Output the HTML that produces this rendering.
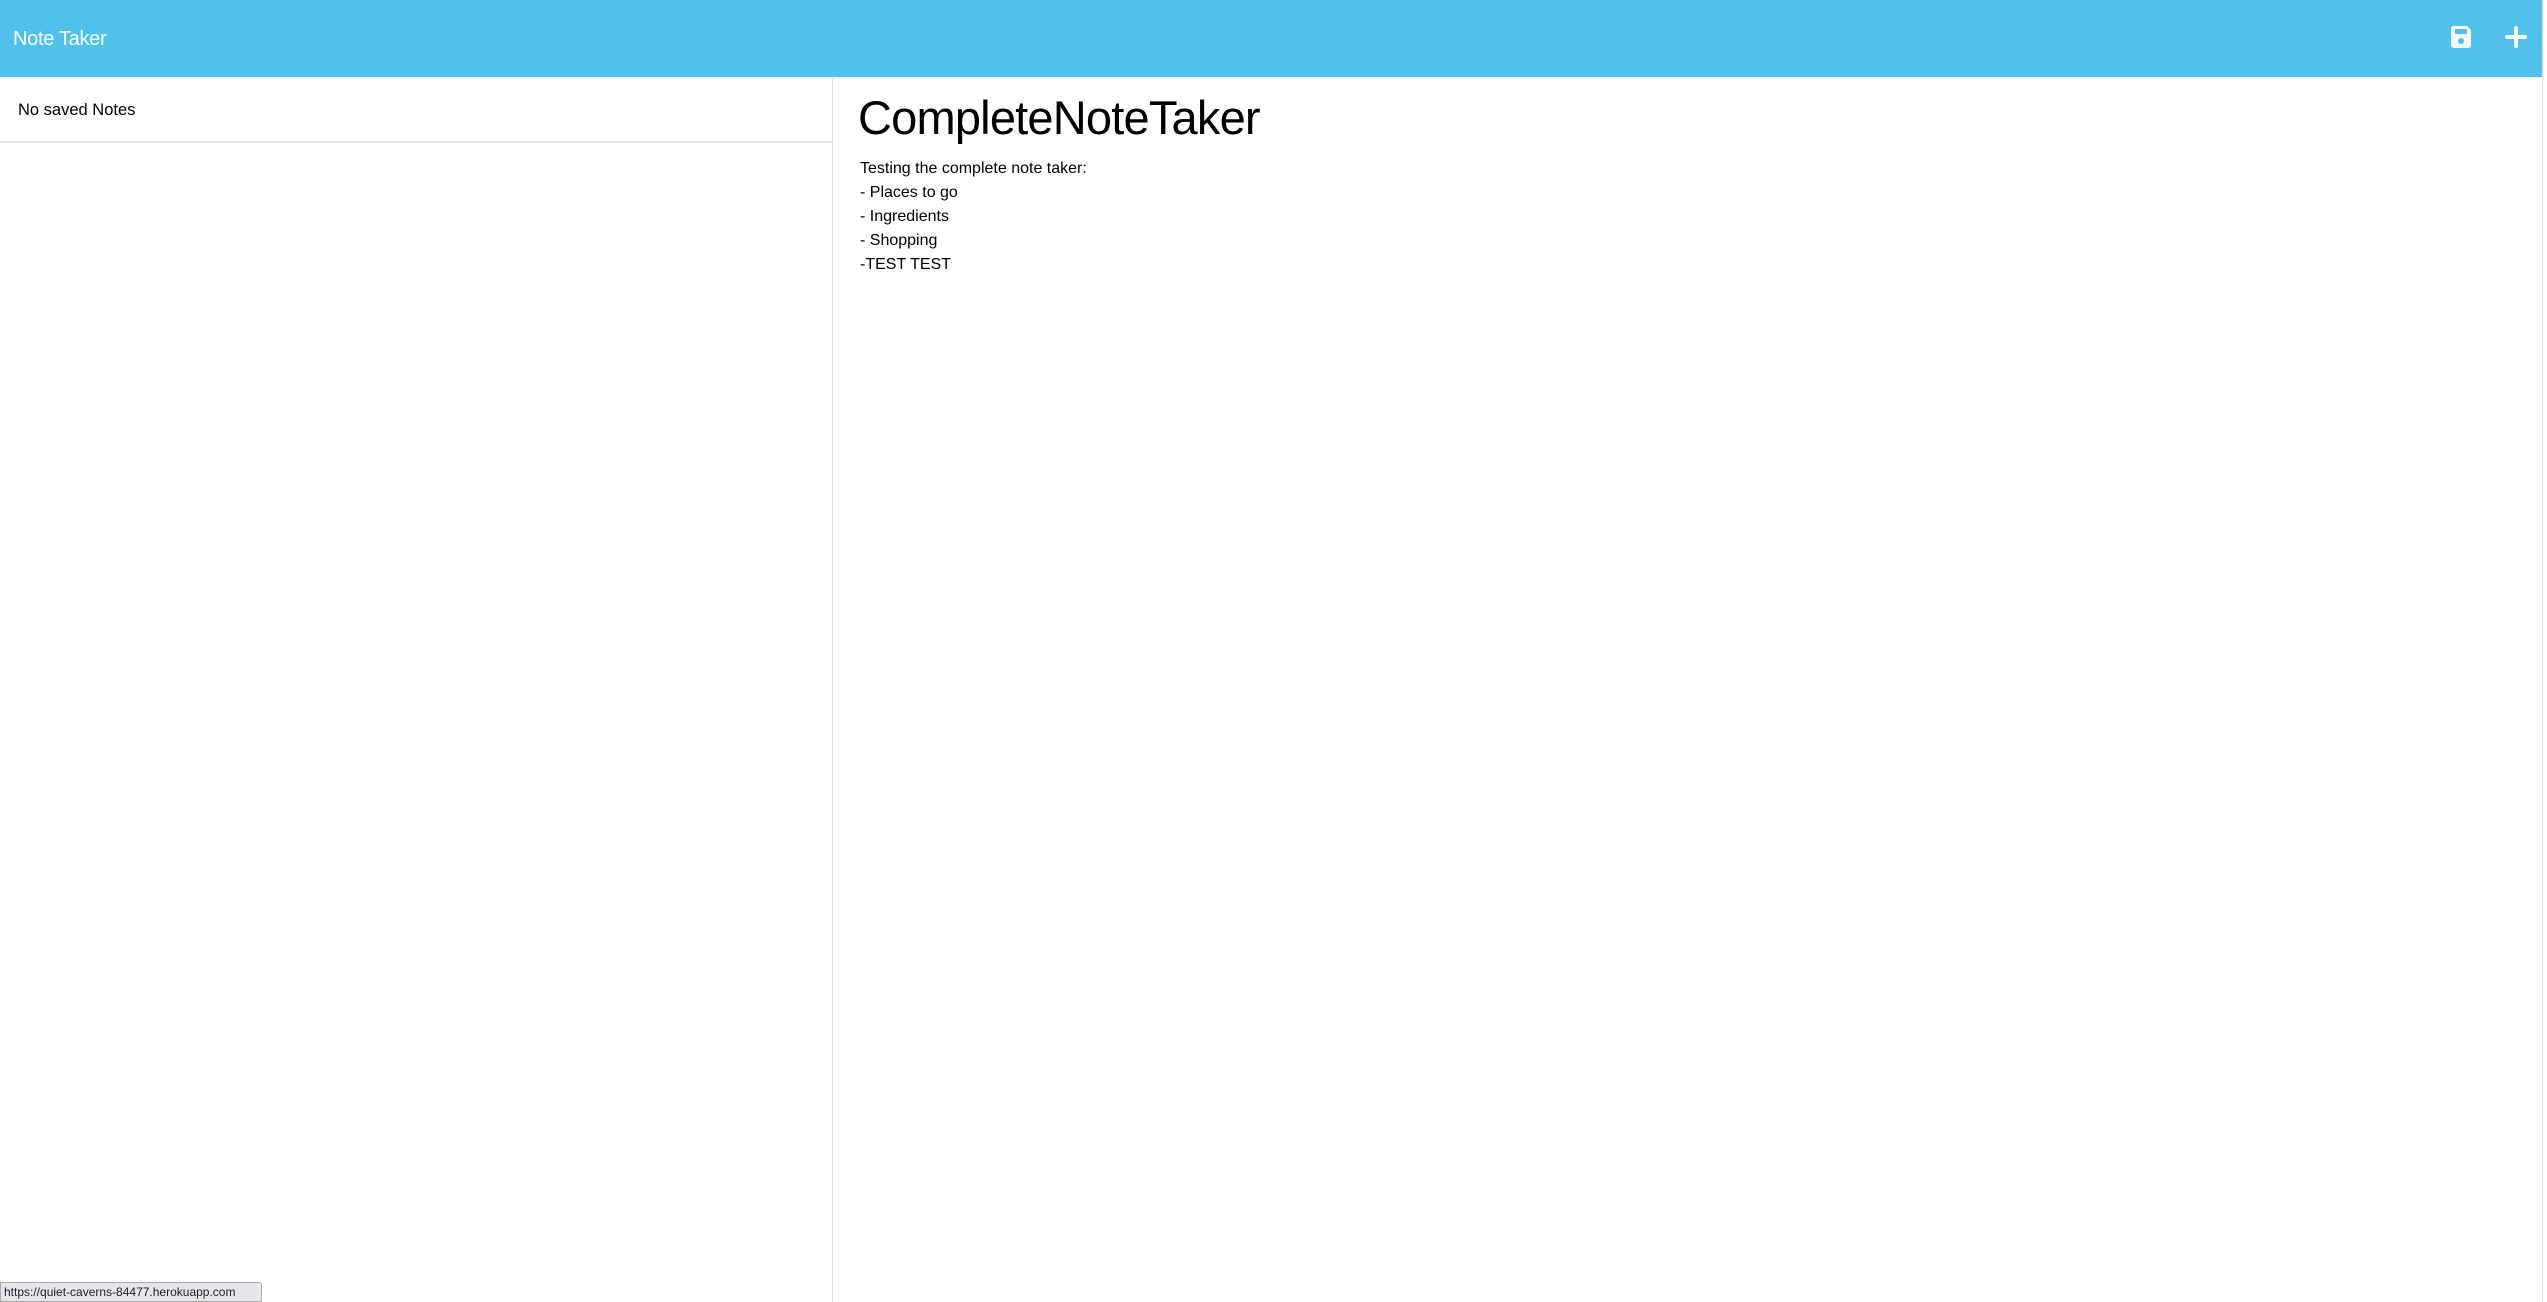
<!DOCTYPE html>
<html><head><meta charset="utf-8"><style>
html,body{margin:0;padding:0;width:2547px;height:1302px;overflow:hidden;background:#fff;font-family:"Liberation Sans",Arial,sans-serif;color:#000}
.hdr{position:absolute;left:0;top:0;width:2542px;height:77px;background:#4fc1ec}
.hdr .t{position:absolute;left:13px;top:28px;font-size:20px;color:#fff;letter-spacing:-0.3px}
.sb{position:absolute;left:2542px;top:0;width:5px;height:1302px;background:#fff;border-left:1px solid #ddd}
.left{position:absolute;left:0;top:77px;width:832px;height:1225px;border-right:1px solid #ddd}
.item{height:66px;border-bottom:2px solid #e5e5e5;font-size:16.5px;line-height:66px;padding-left:18px;box-sizing:border-box}
.title{position:absolute;left:858px;top:90px;font-size:47px;letter-spacing:-0.8px}
.body{position:absolute;left:860px;top:157px;font-size:16px;line-height:24px}
.status{position:absolute;left:0;top:1282px;width:262px;height:20px;background:#e4e6ea;border:1px solid #aaa;border-radius:0 3px 0 0;box-sizing:border-box;font-size:12px;line-height:18px;padding-left:3px;color:#222}
</style></head><body>
<div class="hdr"><div class="t">Note Taker</div>
<svg style="position:absolute;left:2450px;top:25px" width="22" height="24" viewBox="0 0 22 24"><path d="M3 1h14l4 4v15a3 3 0 0 1-3 3H4a3 3 0 0 1-3-3V4a3 3 0 0 1 2-3z" fill="#f4f7fa"/><rect x="5" y="4" width="12" height="5" rx="1" fill="#4fc1ec"/><circle cx="11" cy="16" r="3" fill="#4fc1ec"/></svg>
<svg style="position:absolute;left:2505px;top:26px" width="22" height="22" viewBox="0 0 22 22"><path d="M11 2v18M2 11h18" stroke="#fff" stroke-width="4" stroke-linecap="round"/></svg>
</div>
<div class="sb"></div>
<div class="left"><div class="item">No saved Notes</div></div>
<div class="title">CompleteNoteTaker</div>
<div class="body">Testing the complete note taker:<br>- Places to go<br>- Ingredients<br>- Shopping<br>-TEST TEST</div>
<div class="status">https://quiet-caverns-84477.herokuapp.com</div>
</body></html>
